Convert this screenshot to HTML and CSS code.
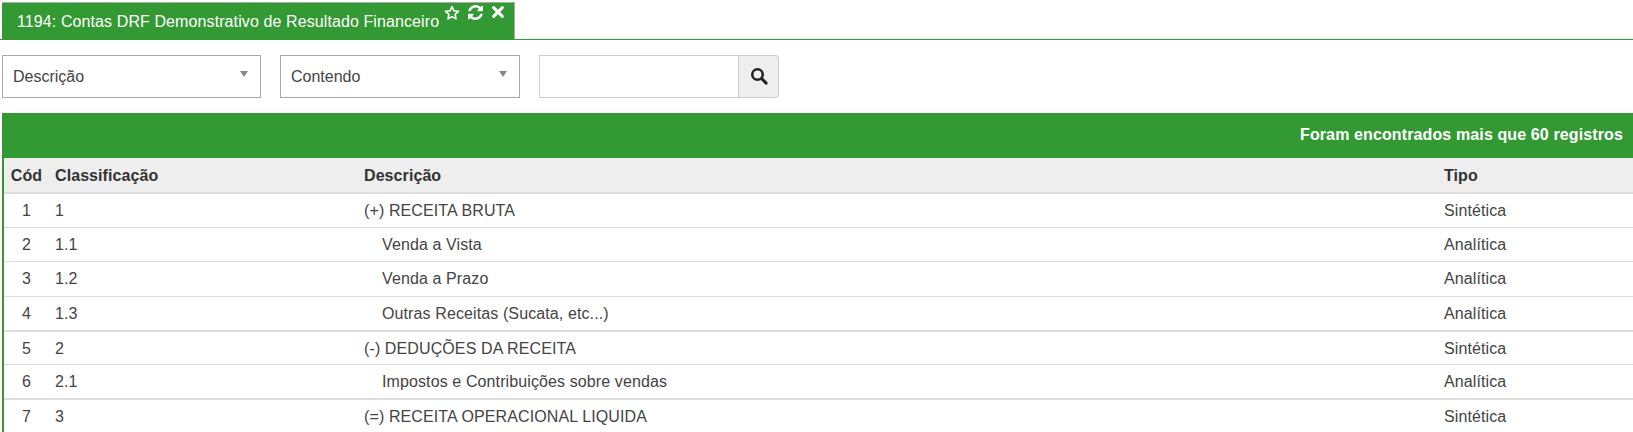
FILE: index.html
```html
<!DOCTYPE html>
<html lang="pt-BR">
<head>
<meta charset="utf-8">
<title>Contas DRF</title>
<link rel="stylesheet" href="styles.css">
</head>
<body>
<div class="tabbar">
  <div class="tab">
    <span class="tab-title">1194: Contas DRF Demonstrativo de Resultado Financeiro</span>
    <span class="tab-icons">
      <svg class="ico" width="16" height="16" viewBox="0 0 24 24"><path d="M12 2.500l2.900 6.200 6.800.8-5 4.600 1.300 6.700-6-3.300-6 3.300 1.300-6.700-5-4.600 6.800-.8z" fill="none" stroke="#fff" stroke-width="2.400" stroke-linejoin="round"/></svg>
      <svg class="ico" width="15" height="15" viewBox="0 0 1536 1536"><path fill="#fff" d="M1511 928q0 5-1 7-64 268-268 434.500t-478 166.500q-146 0-282.500-55t-243.500-157l-129 129q-19 19-45 19t-45-19-19-45v-448q0-26 19-45t45-19h448q26 0 45 19t19 45-19 45l-137 137q71 66 161 102t187 36q134 0 250-65t186-179q11-17 53-117 8-23 30-23h192q13 0 22.500 9.500t9.500 22.500zm25-800v448q0 26-19 45t-45 19h-448q-26 0-45-19t-19-45 19-45l138-138q-148-137-349-137-134 0-250 65t-186 179q-11 17-53 117-8 23-30 23h-199q-13 0-22.500-9.500t-9.500-22.500v-7q65-268 270-434.500t480-166.500q146 0 284 55.500t245 156.500l130-129q19-19 45-19t45 19 19 45z"/></svg>
      <svg class="ico" width="14" height="14" viewBox="0 0 24 24"><path d="M4.500 4.500l15 15M19.500 4.500l-15 15" stroke="#fff" stroke-width="5.200" stroke-linecap="round"/></svg>
    </span>
  </div>
</div>

<form class="filters">
  <div class="select select-field"><span>Descrição</span><i class="caret"></i></div>
  <div class="select select-op"><span>Contendo</span><i class="caret"></i></div>
  <div class="search">
    <div class="search-input"></div>
    <div class="search-btn">
      <svg width="18" height="18" viewBox="0 0 24 24"><circle cx="10" cy="10" r="7" fill="none" stroke="#222" stroke-width="3.400"/><path d="M15.500 15.500l6 6" stroke="#222" stroke-width="3.800" stroke-linecap="round"/></svg>
    </div>
  </div>
</form>

<section class="panel">
  <div class="panel-head">Foram encontrados mais que 60 registros</div>
  <table class="grid">
    <colgroup>
      <col class="c-cod"><col class="c-class"><col class="c-desc"><col class="c-tipo">
    </colgroup>
    <thead>
      <tr><th class="cod">Cód</th><th>Classificação</th><th>Descrição</th><th>Tipo</th></tr>
    </thead>
    <tbody>
      <tr><td class="cod">1</td><td>1</td><td>(+) RECEITA BRUTA</td><td>Sintética</td></tr>
      <tr><td class="cod">2</td><td>1.1</td><td class="sub">Venda a Vista</td><td>Analítica</td></tr>
      <tr><td class="cod">3</td><td>1.2</td><td class="sub">Venda a Prazo</td><td>Analítica</td></tr>
      <tr class="end"><td class="cod">4</td><td>1.3</td><td class="sub">Outras Receitas (Sucata, etc...)</td><td>Analítica</td></tr>
      <tr><td class="cod">5</td><td>2</td><td>(-) DEDUÇÕES DA RECEITA</td><td>Sintética</td></tr>
      <tr class="end"><td class="cod">6</td><td>2.1</td><td class="sub">Impostos e Contribuições sobre vendas</td><td>Analítica</td></tr>
      <tr><td class="cod">7</td><td>3</td><td>(=) RECEITA OPERACIONAL LIQUIDA</td><td>Sintética</td></tr>
    </tbody>
  </table>
</section>
</body>
</html>
```
FILE: styles.css
```css
* { box-sizing: border-box; }
html, body { margin: 0; padding: 0; height: 432px; overflow: hidden; background: #fff; }
body { font-family: "Liberation Sans", Arial, sans-serif; font-size: 16px; color: #333; }

.tabbar { height: 40px; padding: 2px 0 0 2px; border-bottom: 1px solid #339933; }
.tab { width: 513px; height: 37px; background: #339933; border-top: 1px solid #aaa; border-right: 1px solid #aaa; display: flex; padding-left: 15px; color: #fff; }
.tab-title { font-size: 16px; line-height: 18px; padding-top: 10px; white-space: nowrap; letter-spacing: 0.1px; }
.tab-icons { display: flex; align-items: flex-start; gap: 8px; margin-left: 5px; padding-top: 2px; }
.ico { display: block; }

.filters { display: flex; align-items: flex-start; padding: 15px 0 0 2px; height: 73px; }
.select { height: 43px; border: 1px solid #aaa; background: #fff; display: flex; align-items: center; justify-content: space-between; padding: 0 12px 0 10px; font-size: 16px; color: #444; }
.select-field { width: 259px; margin-right: 19px; }
.select-op { width: 240px; margin-right: 19px; }
.caret { width: 0; height: 0; border-style: solid; border-width: 6px 4.500px 0; border-color: #888 transparent transparent; margin-bottom: 5px; }
.search { display: flex; height: 43px; }
.search-input { width: 200px; border: 1px solid #ccc; background: #fff; }
.search-btn { width: 40px; background: #eee; border: 1px solid #ccc; border-left: 0; border-radius: 0 4px 4px 0; display: flex; align-items: center; justify-content: center; padding-bottom: 2px; }

.panel { margin-left: 2px; border-left: 2px solid #339933; }
.panel-head { height: 45px; margin-left: -2px; background: #339933; color: #fff; font-weight: bold; font-size: 16px; line-height: 44px; text-align: right; padding-right: 10px; letter-spacing: 0.12px; }

.grid { width: 1629px; table-layout: fixed; border-collapse: collapse; font-size: 16px; }
.c-cod { width: 45px; }
.c-class { width: 309px; }
.c-desc { width: 1080px; }
.c-tipo { width: 195px; }
.grid th { height: 35px; padding: 1px 6px 0; background: #eee; text-align: left; font-weight: bold; letter-spacing: 0.08px; color: #333; border-bottom: 2px solid #ddd; }
.grid td { height: 34.400px; padding: 1px 6px 0; border-bottom: 1px solid #ddd; color: #444; letter-spacing: 0.11px; }
.grid tr.end td { border-bottom-width: 2px; }
.grid .cod { text-align: center; padding: 1px 0 0; }
.grid .sub { padding-left: 24px; }
```
